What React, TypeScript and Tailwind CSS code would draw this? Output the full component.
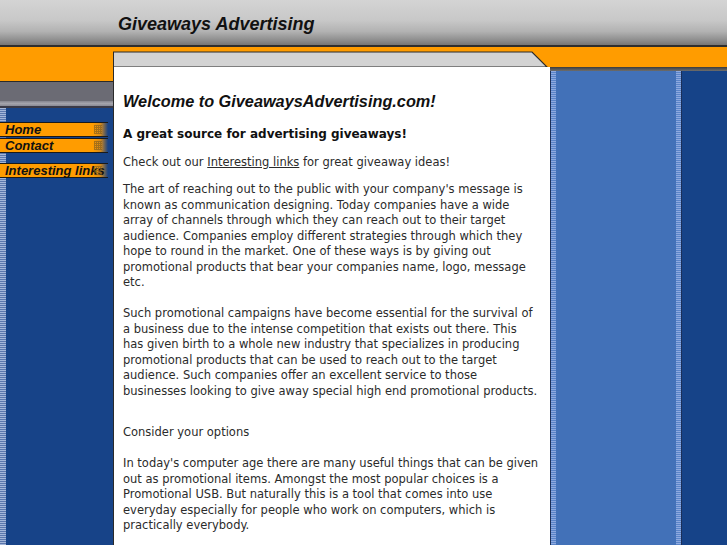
const orange = "#ff9c00";

function NavItem({ label, className = "" }: { label: string; className?: string }) {
  return (
    <a
      href="#"
      className={`relative block h-[15px] w-[108px] border-y border-[#1a1a1a] bg-[linear-gradient(to_right,#ff9c00_86%,#d58a1a_93%,#174388)] pl-[5px] font-['Liberation_Sans',Arial,sans-serif] text-[13px] leading-[13px] font-bold italic text-[#111] ${className}`}
    >
      {label}
      <span className="absolute top-[2px] right-[6px] h-[9px] w-[8px] bg-[repeating-linear-gradient(to_right,#7a5a20_0_1px,transparent_1px_2px),repeating-linear-gradient(to_bottom,#7a5a20_0_1px,transparent_1px_2px)] opacity-60" />
    </a>
  );
}

function ContentTop() {
  return (
    <svg width="437" height="20" viewBox="0 0 437 20" className="block">
      <rect x="0" y="0" width="437" height="20" fill={orange} />
      <polygon points="0,5 419,5 434,20 0,20" fill="#d3d3d3" stroke="#2a2a2a" strokeWidth="1.2" />
      <line x1="0.5" y1="5" x2="0.5" y2="20" stroke="#2a2a2a" strokeWidth="1" />
    </svg>
  );
}

export default function App() {
  return (
    <div className="flex min-h-screen flex-col bg-[#164388] font-['DejaVu_Sans',Verdana,sans-serif]">
      <header className="h-[47px] shrink-0 border-b-2 border-[#2e2e2e] bg-[linear-gradient(to_bottom,#d4d4d4_0%,#c8c8c8_45%,#b2b2b2_70%,#8c8c8c_90%,#767676_100%)] pt-[13px] pl-[118px]">
        <h1 className="font-['Liberation_Sans',Arial,sans-serif] text-[18px] leading-[22px] font-bold italic text-[#111]">
          Giveaways Advertising
        </h1>
      </header>

      <div className="flex flex-1">
        <aside className="flex w-[113px] shrink-0 flex-col">
          <div className="h-[35px] border-b border-[#2a2a2a] bg-[#ff9c00]" />
          <div className="h-[19px] bg-[#6b6b74]" />
          <div className="h-[7px] border-b-2 border-[#3a3a48] bg-[linear-gradient(to_bottom,#85858f,#a4a4ac,#8a8a94)]" />
          <nav className="flex-1 [background:linear-gradient(to_right,transparent_6px,#174388_6px),repeating-linear-gradient(to_bottom,#a4b6d8_0_1px,#5b77ad_1px_2px)] pt-[14px]">
            <NavItem label="Home" />
            <NavItem label="Contact" className="mt-px" />
            <NavItem label="Interesting links" className="mt-[10px]" />
          </nav>
        </aside>

        <main className="flex w-[437px] shrink-0 flex-col">
          <ContentTop />
          <div className="flex-1 border-l border-[#2a2a2a] bg-white pt-[24px] pl-[9px] text-[11.5px] leading-[15.5px] text-[#2b2b2b]">
            <div className="w-[417px]">
              <h2 className="font-['Liberation_Sans',Arial,sans-serif] text-[16.3px] leading-[20px] font-bold italic text-[#111]">
                Welcome to GiveawaysAdvertising.com!
              </h2>
              <h3 className="mt-[15px] text-[12px] leading-[16px] font-bold text-[#111]">
                A great source for advertising giveaways!
              </h3>
              <p className="mt-[13px]">
                Check out our <a href="#" className="underline">Interesting links</a> for great giveaway ideas!
              </p>
              <p className="mt-[11.5px]">
                The art of reaching out to the public with your company's message is known as communication
                designing. Today companies have a wide array of channels through which they can reach out to
                their target audience. Companies employ different strategies through which they hope to round
                in the market. One of these ways is by giving out promotional products that bear your companies
                name, logo, message etc.
                <br />
                <br />
                Such promotional campaigns have become essential for the survival of a business due to the
                intense competition that exists out there. This has given birth to a whole new industry that
                specializes in producing promotional products that can be used to reach out to the target
                audience. Such companies offer an excellent service to those businesses looking to give away
                special high end promotional products.
                <br />
                <br />
              </p>
              <p className="mt-[10.5px]">Consider your options</p>
              <p className="mt-[15.5px]">
                In today's computer age there are many useful things that can be given out as promotional items.
                Amongst the most popular choices is a Promotional USB. But naturally this is a tool that comes
                into use everyday especially for people who work on computers, which is practically everybody.
              </p>
            </div>
          </div>
        </main>

        <div className="flex flex-1 flex-col">
          <div className="h-[20px] bg-[#ff9c00]" />
          <div className="h-[4px] bg-[linear-gradient(to_bottom,#3c3c3c,#6e6e6e)]" />
          <div className="flex flex-1">
            <div className="w-[132px] border-x border-[#1b2f58] [background:linear-gradient(to_right,transparent_5px,#4271b8_5px,#4271b8_calc(100%-5px),transparent_calc(100%-5px)),repeating-linear-gradient(to_bottom,#8eaae0_0_1px,#5a84c8_1px_2px)]" />
            <div className="flex-1 bg-[#164388]" />
          </div>
        </div>
      </div>
    </div>
  );
}
